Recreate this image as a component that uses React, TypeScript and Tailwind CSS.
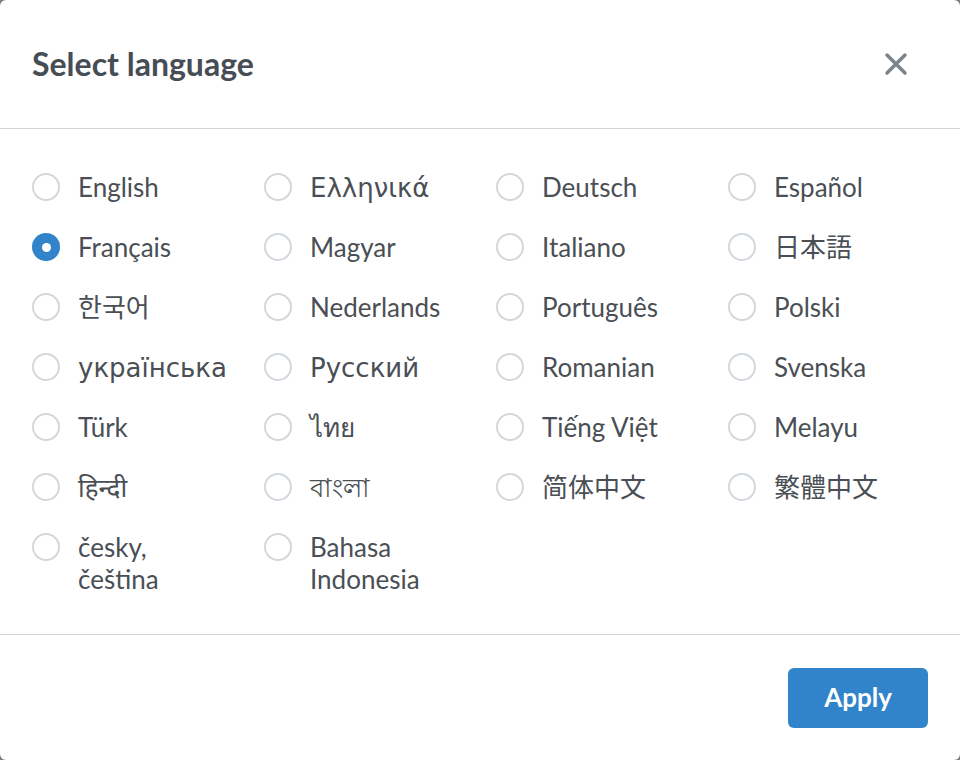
import { useState } from 'react';

const languages = [
  'English', 'Ελληνικά', 'Deutsch', 'Español',
  'Français', 'Magyar', 'Italiano', '日本語',
  '한국어', 'Nederlands', 'Português', 'Polski',
  'українська', 'Русский', 'Romanian', 'Svenska',
  'Türk', 'ไทย', 'Tiếng Việt', 'Melayu',
  'हिन्दी', 'বাংলা', '简体中文', '繁體中文',
  'česky, čeština', 'Bahasa Indonesia',
];

// Greek and Cyrillic labels fall back to a wider face in the original
const wide = new Set(['Ελληνικά', 'українська', 'Русский']);

function Radio({ checked }: { checked: boolean }) {
  return checked ? (
    <span className="mt-[2px] flex h-[28px] w-[28px] shrink-0 items-center justify-center rounded-full bg-[#3184c9]">
      <span className="h-[9px] w-[9px] rounded-full bg-white" />
    </span>
  ) : (
    <span className="mt-[2px] h-[28px] w-[28px] shrink-0 rounded-full border-2 border-[#d3d8dd] bg-white" />
  );
}

export default function App() {
  const [selected, setSelected] = useState('Français');

  return (
    <div className="h-[760px] w-[960px] bg-[#7d7d7d]">
      <div
        className="flex h-full w-full flex-col rounded-[6px] bg-white text-[#4a4f55]"
        style={{ fontFamily: 'Lato, "Noto Sans CJK JP", "Noto Sans CJK KR", "Noto Sans", sans-serif' }}
      >
        {/* Header */}
        <div className="flex h-[129px] shrink-0 items-center justify-between border-b border-[#d1d5da] pl-8 pr-[52px]">
          <h2 className="text-[32px] leading-[40px] font-bold text-[#474d54]">Select language</h2>
          <button className="text-[#7b848b]" aria-label="Close">
            <svg width="24" height="24" viewBox="0 0 24 24" fill="none" stroke="currentColor" strokeWidth="3.5" strokeLinecap="round">
              <path d="M3 3l18 18M21 3L3 21" />
            </svg>
          </button>
        </div>

        {/* Options */}
        <div className="grid flex-1 grid-cols-[repeat(4,232px)] content-start gap-y-[28px] px-8 pt-[42px]">
          {languages.map((lang) => (
            <label
              key={lang}
              className="flex cursor-pointer items-start gap-[18px]"
              onClick={() => setSelected(lang)}
            >
              <Radio checked={selected === lang} />
              <span
                className={
                  wide.has(lang)
                    ? 'w-[152px] pt-[2px] font-["DejaVu_Sans"] text-[26px] leading-[30px] whitespace-nowrap'
                    : 'w-[152px] text-[26px] leading-[32px]'
                }
              >
                {lang}
              </span>
            </label>
          ))}
        </div>

        {/* Footer */}
        <div className="flex h-[126px] shrink-0 items-center justify-end border-t border-[#d1d5da] px-8">
          <button className="h-[60px] w-[140px] rounded-[6px] bg-[#3184c9] text-[26px] font-bold text-white">
            Apply
          </button>
        </div>
      </div>
    </div>
  );
}
